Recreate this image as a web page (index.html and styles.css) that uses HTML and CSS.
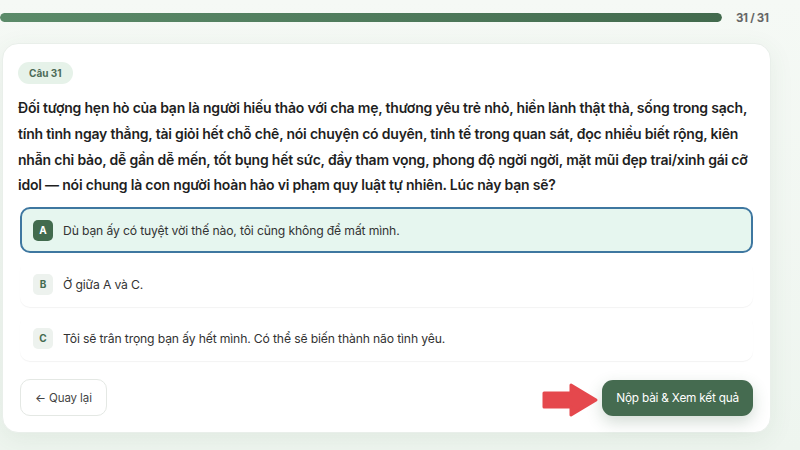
FILE: index.html
```html
<!DOCTYPE html>
<html lang="vi">
<head>
    <meta charset="UTF-8">
    <meta name="viewport" content="width=device-width, initial-scale=1.0">
    <title>Câu 31 / 31</title>
    <link rel="stylesheet" href="styles.css">
</head>
<body>
    <div class="page">
        <!-- Progress -->
        <div class="progress-row">
            <div class="progress-track">
                <div class="progress-fill" style="width: 100%"></div>
            </div>
            <span class="progress-count">31 / 31</span>
        </div>

        <!-- Question card -->
        <section class="card">
            <span class="q-badge">Câu 31</span>
            <p class="q-text">Đối tượng hẹn hò của bạn là người hiếu thảo với cha mẹ, thương yêu trẻ nhỏ, hiền lành thật thà, sống trong sạch, tính tình ngay thẳng, tài giỏi hết chỗ chê, nói chuyện có duyên, tinh tế trong quan sát, đọc nhiều biết rộng, kiên nhẫn chỉ bảo, dễ gần dễ mến, tốt bụng hết sức, đầy tham vọng, phong độ ngời ngời, mặt mũi đẹp trai/xinh gái cỡ idol — nói chung là con người hoàn hảo vi phạm quy luật tự nhiên. Lúc này bạn sẽ?</p>

            <div class="options">
                <label class="option selected">
                    <span class="opt-key">A</span>
                    <span class="opt-text">Dù bạn ấy có tuyệt vời thế nào, tôi cũng không để mất mình.</span>
                </label>
                <label class="option">
                    <span class="opt-key">B</span>
                    <span class="opt-text">Ở giữa A và C.</span>
                </label>
                <label class="option">
                    <span class="opt-key">C</span>
                    <span class="opt-text">Tôi sẽ trân trọng bạn ấy hết mình. Có thể sẽ biến thành não tình yêu.</span>
                </label>
            </div>

            <div class="actions">
                <button class="btn-back">&larr; Quay lại</button>
                <div class="submit-wrap">
                    <svg class="hint-arrow" width="58" height="36" viewBox="0 0 58 36">
                        <path d="M3 11 H30 V3 L55 18 L30 33 V25 H3 Z" fill="#e5484d" stroke="#e5484d" stroke-width="3" stroke-linejoin="round"/>
                    </svg>
                    <button class="btn-submit">Nộp bài &amp; Xem kết quả</button>
                </div>
            </div>
        </section>
    </div>
</body>
</html>
```

FILE: styles.css
```css
* {
    margin: 0;
    padding: 0;
    box-sizing: border-box;
}

body {
    font-family: Inter, "Noto Sans", sans-serif;
    background: linear-gradient(180deg, #f5f9f5 0%, #eef5ef 100%);
    color: #222;
    width: 800px;
    height: 450px;
    overflow: hidden;
}

.page {
    padding: 13px 29px 0 2px;
}

/* Progress */
.progress-row {
    display: flex;
    align-items: center;
    height: 9px;
}

.progress-track {
    flex-shrink: 0;
    width: 722px;
    height: 9px;
    margin-left: -2px;
    border-radius: 5px;
    background: #dfe9e1;
    overflow: hidden;
}

.progress-fill {
    height: 100%;
    border-radius: 5px;
    background: linear-gradient(90deg, #5b8b69 0%, #4e7a5b 55%, #426a4d 100%);
}

.progress-count {
    margin-left: 14px;
    white-space: nowrap;
    font-size: 11.5px;
    font-weight: 700;
    letter-spacing: -0.3px;
    color: #666;
}

/* Card */
.card {
    margin-top: 21px;
    width: 769px;
    background: #fff;
    border: 1px solid #e9efea;
    border-radius: 16px;
    box-shadow: 0 6px 24px rgba(60, 100, 70, 0.08);
    padding: 17px 17px 16px 15px;
}

.q-badge {
    display: inline-block;
    height: 22px;
    line-height: 22px;
    padding: 0 11px;
    border-radius: 11px;
    background: #e6f2e9;
    color: #4c6a56;
    font-size: 10px;
    font-weight: 700;
}

.q-text {
    margin-top: 11px;
    font-size: 14px;
    font-weight: 600;
    line-height: 25.8px;
    letter-spacing: -0.2px;
    color: #1f1f1f;
}

/* Options */
.options {
    display: flex;
    flex-direction: column;
    gap: 8px;
    margin: 9px 0 0 2px;
}

.option {
    display: flex;
    align-items: center;
    gap: 10px;
    height: 46px;
    padding: 0 13px;
    border-radius: 10px;
    box-shadow: 0 1px 1px rgba(0, 0, 0, 0.05);
    cursor: pointer;
}

.option.selected {
    border: 2px solid #3e77a0;
    background: #e6f6ef;
    padding: 0 11px;
    box-shadow: none;
}

.opt-key {
    width: 20px;
    height: 21px;
    border-radius: 5px;
    background: #edf2ee;
    color: #446b50;
    font-size: 10px;
    font-weight: 700;
    display: flex;
    align-items: center;
    justify-content: center;
}

.option.selected .opt-key {
    background: #426b4e;
    color: #fff;
}

.opt-text {
    font-size: 12.2px;
    letter-spacing: -0.15px;
    color: #333;
}

/* Actions */
.actions {
    display: flex;
    justify-content: space-between;
    align-items: center;
    margin: 18px 0 0 2px;
}

.btn-back {
    height: 37px;
    padding: 0 14px;
    background: #fff;
    border: 1px solid #e4e8e4;
    border-radius: 10px;
    font-family: inherit;
    font-size: 11.5px;
    letter-spacing: -0.1px;
    color: #444;
    cursor: pointer;
}

.submit-wrap {
    position: relative;
}

.hint-arrow {
    position: absolute;
    left: -61px;
    top: 2px;
}

.btn-submit {
    height: 36px;
    padding: 0 14px;
    border: none;
    border-radius: 11px;
    background: #456b50;
    color: #fff;
    font-family: inherit;
    font-size: 11.8px;
    letter-spacing: -0.2px;
    box-shadow: 0 6px 16px rgba(50, 90, 60, 0.22);
    cursor: pointer;
}
```
